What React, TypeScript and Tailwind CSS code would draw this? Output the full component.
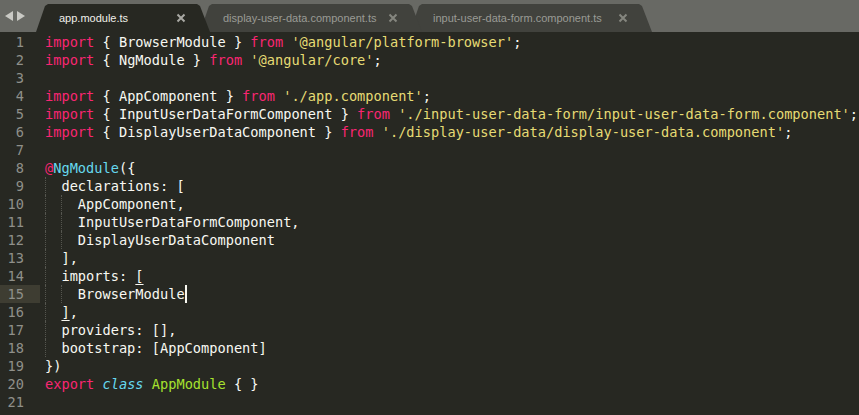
import React from 'react';

type Tok = [string, string?];

const K = 'text-[#f92672]';
const S = 'text-[#e6db74]';
const C = 'text-[#66d9ef]';
const G = 'text-[#a6e22e]';

// each line: indent level (in units of 2 spaces) + tokens
const lines: { indent: number; toks: Tok[] }[] = [
  { indent: 0, toks: [['import', K], [' { BrowserModule } '], ['from', K], [' '], ["'@angular/platform-browser'", S], [';']] },
  { indent: 0, toks: [['import', K], [' { NgModule } '], ['from', K], [' '], ["'@angular/core'", S], [';']] },
  { indent: 0, toks: [] },
  { indent: 0, toks: [['import', K], [' { AppComponent } '], ['from', K], [' '], ["'./app.component'", S], [';']] },
  { indent: 0, toks: [['import', K], [' { InputUserDataFormComponent } '], ['from', K], [' '], ["'./input-user-data-form/input-user-data-form.component'", S], [';']] },
  { indent: 0, toks: [['import', K], [' { DisplayUserDataComponent } '], ['from', K], [' '], ["'./display-user-data/display-user-data.component'", S], [';']] },
  { indent: 0, toks: [] },
  { indent: 0, toks: [['@', K], ['NgModule', C], ['({']] },
  { indent: 1, toks: [['declarations: [']] },
  { indent: 2, toks: [['AppComponent,']] },
  { indent: 2, toks: [['InputUserDataFormComponent,']] },
  { indent: 2, toks: [['DisplayUserDataComponent']] },
  { indent: 1, toks: [['],']] },
  { indent: 1, toks: [['imports: '], ['[', 'underline underline-offset-[3px]']] },
  { indent: 2, toks: [['BrowserModule'], ['', 'cursor']] },
  { indent: 1, toks: [[']', 'underline underline-offset-[3px]'], [',']] },
  { indent: 1, toks: [['providers: [],']] },
  { indent: 1, toks: [['bootstrap: [AppComponent]']] },
  { indent: 0, toks: [['})']] },
  { indent: 0, toks: [['export', K], [' '], ['class', C + ' italic'], [' '], ['AppModule', G], [' { }']] },
  { indent: 0, toks: [] },
];

const Close = ({ color }: { color: string }) => (
  <svg width="10" height="10" viewBox="0 0 10 10" className="shrink-0">
    <path d="M1.5 1.5 L8.5 8.5 M8.5 1.5 L1.5 8.5" stroke={color} strokeWidth="2" />
  </svg>
);

const tabs = [
  { name: 'app.module.ts', w: 'w-[174px]', ml: '', bg: 'bg-[#272822]', text: 'text-[#f0f0ea]', x: '#a9a9a4', z: 'z-30' },
  { name: 'display-user-data.component.ts', w: 'w-[222px]', ml: '-ml-[10px]', bg: 'bg-[#41423d]', text: 'text-[#9a9b95]', x: '#85867f', z: 'z-20' },
  { name: 'input-user-data-form.component.ts', w: 'w-[242px]', ml: '-ml-[12px]', bg: 'bg-[#41423d]', text: 'text-[#9a9b95]', x: '#85867f', z: 'z-10' },
];

export default function App() {
  return (
    <div className="w-[859px] h-[415px] overflow-hidden bg-[#272822]">
      {/* tab bar */}
      <div className="flex items-end h-[32px] bg-[#686964] font-['Liberation_Sans',sans-serif] text-[11px]">
        <div className="w-[36px] h-full flex items-center gap-[4px] pl-[5px] pb-[1px]">
          <svg width="8" height="10" viewBox="0 0 8 10"><path d="M8 0 L0 5 L8 10 Z" fill="#c9c9c4" /></svg>
          <svg width="8" height="10" viewBox="0 0 8 10"><path d="M0 0 L8 5 L0 10 Z" fill="#c9c9c4" /></svg>
        </div>
        {tabs.map((t) => (
          <div
            key={t.name}
            className={`relative ${t.z} ${t.w} ${t.ml} ${t.bg} h-[28px] flex items-center justify-between pl-[23px] pr-[24px] [clip-path:polygon(9px_2px,12px_0,calc(100%-13px)_0,calc(100%-10px)_2px,100%_100%,0_100%)]`}
          >
            <span className={`${t.text} whitespace-nowrap`}>{t.name}</span>
            <Close color={t.x} />
          </div>
        ))}
      </div>

      {/* editor */}
      <div className="pt-[1px] font-['DejaVu_Sans_Mono',monospace] text-[13.65px] leading-[18px] text-[#f8f8f2]">
        {lines.map((ln, i) => (
          <div key={i} className="flex h-[18px]">
            <div
              className={`w-[40px] shrink-0 text-right pr-[16px] text-[#8f908a] ${i === 14 ? 'bg-[#3e3d32]' : ''}`}
            >
              {i + 1}
            </div>
            <div className="pl-[5px] flex whitespace-pre">
              {Array.from({ length: ln.indent }).map((_, j) => (
                <span key={j} className="inline-block w-[2ch] h-[18px] border-l border-dotted border-[#55564f]" />
              ))}
              {ln.toks.map(([s, cls], j) =>
                cls === 'cursor' ? (
                  <span key={j} className="inline-block w-[2px] h-[18px] bg-[#f8f8f0]" />
                ) : (
                  <span key={j} className={cls}>{s}</span>
                )
              )}
            </div>
          </div>
        ))}
      </div>
    </div>
  );
}
